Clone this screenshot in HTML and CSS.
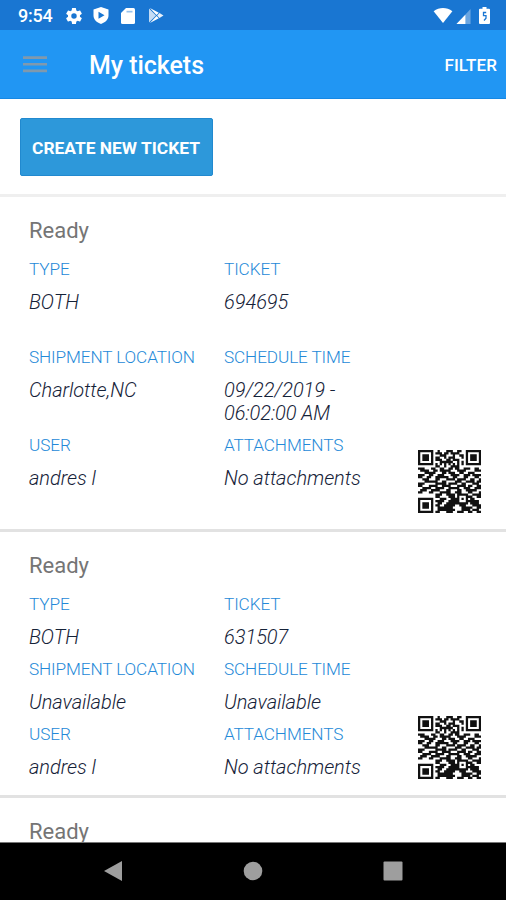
FILE: index.html
```html
<!DOCTYPE html>
<html lang="en">
<head>
<meta charset="utf-8">
<title>My tickets</title>
<link rel="stylesheet" href="styles.css">
</head>
<body>
<div class="phone">
  <header class="status">
    <span class="clock">9:54</span>
    <svg class="s-icon gear" viewBox="2 2 20 20"><path fill-rule="evenodd" d="M19.4 13a7.500 7.500 0 0 0 0-2l2.100-1.650c.2-.15.25-.4.120-.640l-2-3.460c-.12-.22-.38-.3-.6-.22l-2.500 1a7.300 7.300 0 0 0-1.700-1l-.38-2.650A.5.5 0 0 0 14 2h-4a.5.5 0 0 0-.5.420L9.120 5.070a7.700 7.700 0 0 0-1.700 1l-2.480-1a.5.5 0 0 0-.6.220l-2 3.460c-.13.220-.07.490.120.640L4.570 11a7.900 7.900 0 0 0 0 2l-2.100 1.650c-.19.150-.24.420-.12.640l2 3.460c.12.220.39.300.6.220l2.500-1a7.300 7.300 0 0 0 1.700 1l.37 2.650c.04.240.24.400.48.400h4c.25 0 .46-.18.5-.42l.37-2.650a7.700 7.700 0 0 0 1.700-1l2.500 1c.22.080.48 0 .6-.22l2-3.460a.5.500 0 0 0-.12-.64zM12 15.400a3.400 3.400 0 1 1 0-6.800 3.400 3.400 0 0 1 0 6.800z"/></svg>
    <svg class="s-icon shield" viewBox="0 0 16 17"><path fill-rule="evenodd" d="M8 0l7.500 2.500v6c0 4-3.200 7-7.500 8.500C3.700 15.500.5 12.500.5 8.500v-6zM5.500 4.800v7L11.500 8.300z"/></svg>
    <svg class="s-icon sd" viewBox="0 0 14 16"><path fill-rule="evenodd" d="M5 0h7.500Q14 0 14 1.500v13q0 1.500-1.500 1.500h-11Q0 16 0 14.500V5z"/><path d="M5.500 2.800h6v1.700h-6z" fill="#1976d2" opacity=".45"/></svg>
    <svg class="s-icon play" viewBox="0 0 16 16"><path d="M.5.5v15L8 8z" opacity=".75"/><path d="M1.500 0L11 5 8.500 7.500zM1.500 16L11 11 8.500 8.500z"/><path d="M11.700 5.400L16 8l-4.300 2.600L9.200 8z" opacity=".9"/></svg>
    <span class="spacer"></span>
    <svg class="s-icon wifi" viewBox="0 0 20 16"><path d="M0 3.500C6-1 14-1 20 3.500L10 16z"/></svg>
    <svg class="s-icon signal" viewBox="0 0 15 16"><path d="M15 0v16H0z" opacity=".35"/><path d="M9.500 6v10H0z"/></svg>
    <svg class="s-icon battery" viewBox="0 0 11 17"><path d="M3.500 0h4v1.800H10q1 0 1 1V16q0 1-1 1H1q-1 0-1-1V2.800q0-1 1-1h2.500z"/><path d="M7.200 5.500H4.500v3.200h2.500v2.500L5 13.500" fill="none" stroke="#1976d2" stroke-width="1.300"/></svg>
  </header>
  <nav class="appbar">
    <svg class="menu" viewBox="0 0 24 18"><path d="M0 1.600h24M0 8.200h24M0 14.900h24"/></svg>
    <h1>My tickets</h1>
    <span class="filter">FILTER</span>
  </nav>
  <main class="content">
    <section class="create"><button class="create-btn">CREATE NEW TICKET</button></section>
    <article class="ticket">
      <h2>Ready</h2>
      <div class="body">
        <dl class="fields spaced">
          <div><dt>TYPE</dt><dd>BOTH</dd></div>
          <div><dt>TICKET</dt><dd>694695</dd></div>
          <div><dt>SHIPMENT LOCATION</dt><dd>Charlotte,NC</dd></div>
          <div><dt>SCHEDULE TIME</dt><dd>09/22/2019 -<br>06:02:00 AM</dd></div>
          <div><dt>USER</dt><dd>andres l</dd></div>
          <div><dt>ATTACHMENTS</dt><dd>No attachments</dd></div>
        </dl>
        <svg class="qr" viewBox="0 0 29 29"></svg>
      </div>
    </article>
    <article class="ticket compact">
      <h2>Ready</h2>
      <div class="body">
        <dl class="fields">
          <div><dt>TYPE</dt><dd>BOTH</dd></div>
          <div><dt>TICKET</dt><dd>631507</dd></div>
          <div><dt>SHIPMENT LOCATION</dt><dd>Unavailable</dd></div>
          <div><dt>SCHEDULE TIME</dt><dd>Unavailable</dd></div>
          <div><dt>USER</dt><dd>andres l</dd></div>
          <div><dt>ATTACHMENTS</dt><dd>No attachments</dd></div>
        </dl>
        <svg class="qr" viewBox="0 0 29 29"></svg>
      </div>
    </article>
    <article class="ticket"><h2>Ready</h2></article>
  </main>
  <footer class="navbar">
    <svg viewBox="0 0 20 22"><path d="M19 1v20L1 11z"/></svg>
    <svg viewBox="0 0 20 22"><circle cx="10" cy="11" r="9.300"/></svg>
    <svg viewBox="0 0 20 22"><rect x=".5" y="1.500" width="19" height="19" rx="1"/></svg>
  </footer>
</div>
<script src="qr.js"></script>
</body>
</html>
```
FILE: styles.css
```css
* { box-sizing: border-box; }
body { margin: 0; font-family: Roboto, "Liberation Sans", sans-serif; background: #fff; }
.phone { width: 506px; height: 900px; display: flex; flex-direction: column; overflow: hidden; }
.status { height: 30px; flex: none; background: #1976d2; color: #fff; display: flex; align-items: center; padding: 1px 16px 0 18px; }
.clock { font-size: 18px; font-weight: 500; line-height: 28px; width: 48px; letter-spacing: -0.2px; }
.s-icon { fill: #fff; flex: none; height: 16px; }
.gear { width: 16px; }
.shield { width: 16px; height: 17px; margin-left: 11px; }
.sd { width: 14px; margin-left: 12px; }
.play { width: 16px; height: 15px; margin-left: 13px; }
.spacer { flex: 1; }
.wifi { width: 20px; height: 15px; }
.signal { width: 15px; height: 15px; margin: 2px 8px 0 3px; }
.battery { width: 11px; height: 17px; }
.appbar { height: 69px; flex: none; background: #2196f3; border-bottom: 1px solid #1688e4; display: flex; align-items: center; padding: 2px 9px 0 23px; color: #fff; }
.menu { width: 24px; height: 18px; stroke: #8099ad; stroke-width: 2.600; margin-top: -1px; }
.appbar h1 { margin: 2px 0 0 42px; font-size: 25px; font-weight: 500; line-height: 30px; flex: 1; letter-spacing: -0.05px; }
.filter { font-size: 17px; font-weight: 500; line-height: 20px; letter-spacing: 0.1px; }
.content { flex: 1; min-height: 0; overflow: hidden; }
.create { height: 98px; padding: 19px 20px 0 19.500px; border-bottom: 3px solid #efefef; }
.create-btn { display: block; width: 193px; height: 58px; padding: 1px 0 0; border: 1px solid #2189cf; border-radius: 2px; background: #2d98da; color: #fff; font: 700 17.400px/20px Roboto, "Liberation Sans", sans-serif; white-space: nowrap; }
.ticket { height: 335px; padding: 20px 25px 0 29px; border-bottom: 3px solid #e2e2e2; }
.ticket.compact { height: 266px; }
.ticket h2 { margin: 0; font-size: 22px; line-height: 28px; height: 36px; font-weight: 400; color: #757575; }
.body { display: flex; justify-content: space-between; height: 260px; }
.compact .body { height: 191px; }
.fields { margin: 0; display: grid; grid-template-columns: 195px 170px; grid-auto-rows: 64.800px; align-content: start; }
.fields.spaced { grid-template-rows: 88px 88px; }
dt { font-size: 17.200px; line-height: 33px; height: 38px; font-weight: 300; color: #2489d8; letter-spacing: -0.12px; white-space: nowrap; }
dd { margin: 0; font-size: 20px; line-height: 23px; font-style: italic; font-weight: 300; color: #152238; letter-spacing: -0.05px; white-space: nowrap; }
.qr { width: 63px; height: 63px; align-self: flex-end; fill: #111; flex: none; }
.navbar { height: 58px; flex: none; background: #000; border-top: 1px solid #777; display: flex; justify-content: center; align-items: center; gap: 120px; padding-bottom: 2px; }
.navbar svg { width: 20px; height: 22px; fill: #9e9e9e; }
```
FILE: qr.js
```js
const rows = [
  "11111110010001110011001111111",
  "10000010111011011110001000001",
  "10111010001110001001101011101",
  "10111010110010111000101011101",
  "10111010111001101110001011101",
  "10000010001111110010101000001",
  "11111110101010101010101111111",
  "00000000110010011110000000000",
  "11100011001100110110011100110",
  "01111001101111100011110000111",
  "00011111000110111001100111000",
  "11100110011100011110011101111",
  "11001100111111001100011000110",
  "00111000110001111011110011001",
  "00011111100110000111001111011",
  "11100000111110111100110001110",
  "11000111100111100011110110011",
  "00111100111100111110011100111",
  "01110011110001100011001111100",
  "11000110001111100111000110001",
  "00000000111001111011111001111",
  "00000000110000111010001110011",
  "11111110001110011110101011000",
  "10000010111100111110001111110",
  "10111010011001111111111011110",
  "10111010110011111001110001111",
  "10111010011111110000111110011",
  "10000010011111111000111101110",
  "11111110110001110011100110011"
];

let d = "";
rows.forEach((row, y) => {
  [...row].forEach((bit, x) => {
    if (bit === "1") d += `M${x} ${y}h1.05v1.05h-1.05z`;
  });
});
document.querySelectorAll(".qr").forEach(svg => {
  const path = document.createElementNS("http://www.w3.org/2000/svg", "path");
  path.setAttribute("d", d);
  svg.appendChild(path);
});
```
